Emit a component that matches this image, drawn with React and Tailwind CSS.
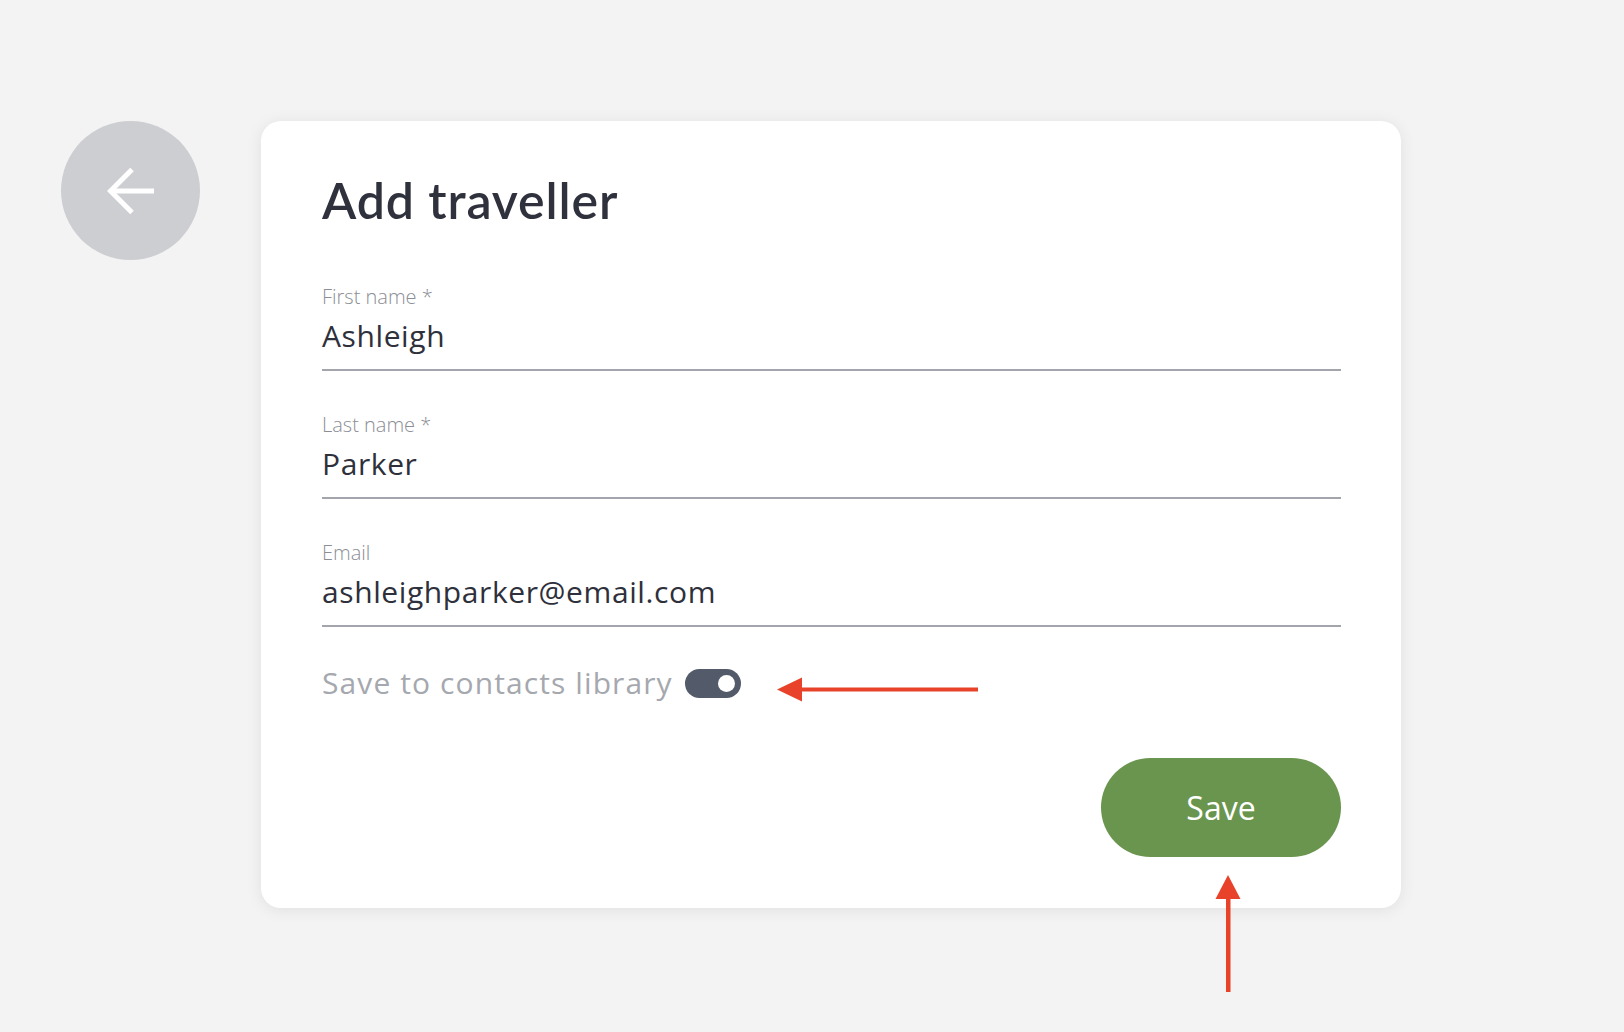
import React from "react";

function Field({ label, value }) {
  return (
    <div className="flex flex-col border-b-2 border-[#a2a5ab] pb-[13px]">
      <div className="h-[24px] text-[20px] leading-[24px] font-light text-[#8b8e95]">{label}</div>
      <div className="mt-[7px] h-[40px] text-[30px] leading-[40px] tracking-[0.6px] text-[#2e303b]">{value}</div>
    </div>
  );
}

export default function App() {
  return (
    <div className="relative h-[1032px] w-full overflow-hidden bg-[#f3f3f3] font-['Open_Sans',sans-serif]">
      <div className="flex items-start gap-[61px] pl-[61px] pt-[121px]">
        <button className="flex h-[139px] w-[139px] shrink-0 items-center justify-center rounded-full bg-[#cdced2]">
          <svg width="48" height="46" viewBox="0 0 48 46" fill="none" stroke="white" strokeWidth="5">
            <path d="M4 23 H47" />
            <path d="M25 1.5 L3.5 23 L25 44.5" />
          </svg>
        </button>
        <div className="flex w-[1140px] flex-col rounded-[20px] bg-white pb-[51px] pl-[61px] pr-[60px] pt-[55px] shadow-[0_2px_16px_rgba(0,0,0,0.08)]">
          <h1 className="h-[48px] font-['Lato',sans-serif] text-[50px] font-semibold leading-[48px] tracking-[0.9px] text-[#2f313c]">
            Add traveller
          </h1>
          <div className="mt-[61px] flex flex-col gap-[42px]">
            <Field label="First name *" value="Ashleigh" />
            <Field label="Last name *" value="Parker" />
            <Field label="Email" value="ashleighparker@email.com" />
          </div>
          <div className="mt-[38px] flex h-[36px] items-center">
            <span className="text-[30px] leading-[36px] tracking-[1.1px] text-[#a5a8ae]">Save to contacts library</span>
            <div className="ml-[12px] flex h-[29px] w-[56px] items-center justify-end rounded-full bg-[#535a69] pr-[6px]">
              <div className="h-[17px] w-[17px] rounded-full bg-white" />
            </div>
          </div>
          <button className="mt-[57px] flex h-[99px] w-[240px] items-center justify-center self-end rounded-full bg-[#6a954f] text-[32px] text-white">
            Save
          </button>
        </div>
      </div>
      <svg className="absolute left-[775px] top-[676px]" width="206" height="27" viewBox="0 0 206 27">
        <polygon points="2,13.5 27,1.5 27,25.5" fill="#e8432a" />
        <rect x="26" y="11.5" width="177" height="4" fill="#e8432a" />
      </svg>
      <svg className="absolute left-[1214px] top-[873px]" width="28" height="120" viewBox="0 0 28 120">
        <polygon points="14,2 1.5,26 26.5,26" fill="#e8432a" />
        <rect x="12" y="25" width="4.5" height="94" fill="#e8432a" />
      </svg>
    </div>
  );
}
